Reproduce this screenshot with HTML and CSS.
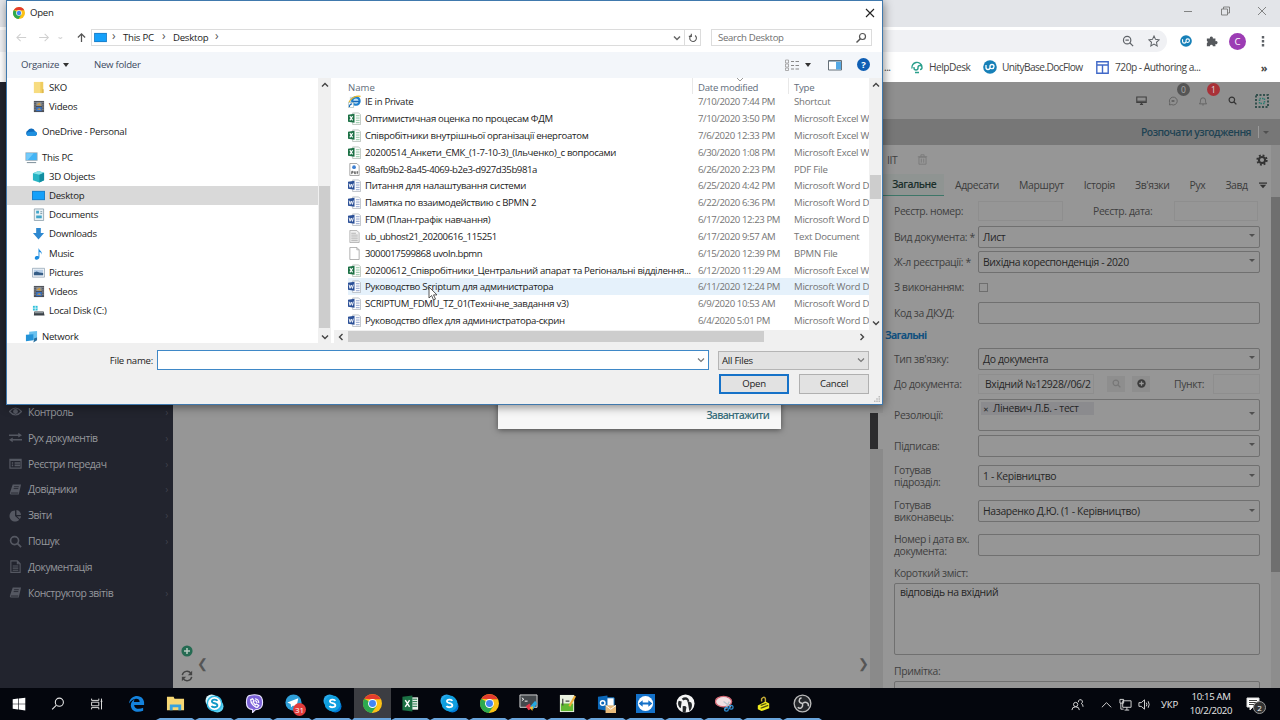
FILE: index.html
```html
<!DOCTYPE html>
<html lang="uk">
<head>
    <meta charset="UTF-8">
    <meta name="viewport" content="width=device-width, initial-scale=1.0">
    <title>Open</title>
    <link rel="stylesheet" href="styles.css">
</head>
<body>
    <!-- icon sprite -->
    <svg class="sprite" xmlns="http://www.w3.org/2000/svg">
        <symbol id="chrome" viewBox="0 0 24 24">
            <circle cx="12" cy="12" r="12" fill="#fbc116"/>
            <path d="M12 12 1.6 6A12 12 0 0 0 11 24l6-9z" fill="#2da94f"/>
            <path d="M1.6 6A12 12 0 0 1 22.4 6.5H12z" fill="#e33b2e"/>
            <circle cx="12" cy="12" r="5.6" fill="#fff"/>
            <circle cx="12" cy="12" r="4.4" fill="#4285f4"/>
        </symbol>
        <symbol id="screen" viewBox="0 0 14 12"><path d="M0 1h14v10H0z" fill="#1b7fc9"/><path d="M1 2h12v8H1z" fill="#14a0fa"/></symbol>
        <symbol id="folder" viewBox="0 0 14 14"><path d="M2 1h10v12H2z" fill="#f7dc80"/><path d="M9 1h3v12H9z" fill="#efcc5e"/><path d="M11 9h1.500v4H11z" fill="#dbb54a"/></symbol>
        <symbol id="video" viewBox="0 0 14 14"><path d="M2 1h11v12H2z" fill="#4a4d54"/><path d="M4.500 2h6v4.500h-6z" fill="#8d9298"/><path d="M4.500 7.500h6V12h-6z" fill="#3973c5"/><path d="M5 5l3-2 2 3zM5 10l3-1 2 2z" fill="#d29a3a"/><path d="M3.200 2v10M11.800 2v10" stroke="#d5d8dc" stroke-dasharray="1 1" stroke-width=".9"/></symbol>
        <symbol id="cloud" viewBox="0 0 14 14"><path d="M3 11.500a3 3 0 0 1 0-5.500 4.300 4.300 0 0 1 7.800.8A2.500 2.500 0 0 1 11.500 11.500z" fill="#0f6cbd"/><path d="M2 11a3 3 0 0 1 2.500-3.500l6-.5a2.400 2.400 0 0 1 1 4.500H3z" fill="#1e90e0"/></symbol>
        <symbol id="pc" viewBox="0 0 14 14"><path d="M.5 1.500h13v9H.5z" fill="#8fa6b5"/><path d="M1.300 2.300h11.400v7.400H1.300z" fill="#43b4f5"/><path d="M1.300 2.300h8L3 9.700H1.300z" fill="#76cbfa"/><path d="M2 12.500h10" stroke="#718591"/></symbol>
        <symbol id="cube" viewBox="0 0 14 14"><path d="M1 3.500 7 1l6 2v8L8 13.500 1 11z" fill="#27b5c4"/><path d="M1 3.500 7 1l6 2-5 2z" fill="#8be3e8"/><path d="M8 5l5-2v8l-5 2.500z" fill="#128da0"/></symbol>
        <symbol id="docs" viewBox="0 0 14 14"><path d="M2.500 1h10v12.500h-10z" fill="#e9f1f5" stroke="#8297a3" stroke-width=".8"/><path d="M4.500 3h3v3h-3zM4.500 8h6v3h-6z" fill="#41a5c9"/><path d="M9 4h2M9 6h2" stroke="#7796a5"/></symbol>
        <symbol id="down" viewBox="0 0 14 14"><path d="M4.500 1h5v5.500H13L7 13.500 1 6.500h3.500z" fill="#2e88d0"/></symbol>
        <symbol id="music" viewBox="0 0 14 14"><path d="M7 1c1 3 4 3 3.500 7-.5-2-1.500-2.500-2.500-2.600V11c0 3-5 3.500-5 1s3-2.500 4-1.800z" fill="#1a8be0"/></symbol>
        <symbol id="pic" viewBox="0 0 14 14"><path d="M.5 2.500h13v9.500H.5z" fill="#f4f6f8" stroke="#8ea1b3" stroke-width=".8"/><path d="M2 4h10v6H2z" fill="#b8cfe8"/><path d="M2 10V7l3-1 3 1 4 .5V10z" fill="#365d86"/></symbol>
        <symbol id="disk" viewBox="0 0 14 14"><path d="M1 2h5v5H1z" fill="#2ec0da"/><path d="M3.500 2v5M1 4.500h5" stroke="#fff" stroke-width=".7"/><path d="M2.500 8h10l1 4.500H2z" fill="#3a4147"/><path d="M3 8.500h9v1.500H3z" fill="#8c9499"/></symbol>
        <symbol id="net" viewBox="0 0 14 14"><path d="M4.500 2 13 1v8l-3 2-5.500-1z" fill="#69c1ef"/><path d="M1 5l8-.5V11L1 12z" fill="#2493d7"/><path d="M10 9l3-1v3l-4 2.500z" fill="#2a6f9e"/></symbol>
        <symbol id="excel" viewBox="0 0 14 14"><path d="M5 1h6.500L13.500 3v10.500H5z" fill="#fbfdfb" stroke="#a3ada6" stroke-width=".7"/><path d="M8.500 4h4M8.500 6.500h4M8.500 9h4M8.500 11.500h4" stroke="#8cc3a0"/><path d="M0 3 7 2v9.500L0 10.500z" fill="#1c7145"/><path d="M2 4.500l3 4.500M5 4.500L2 9" stroke="#fff" stroke-width="1.200"/></symbol>
        <symbol id="word" viewBox="0 0 14 14"><path d="M5 1h6.500L13.500 3v10.500H5z" fill="#fbfcfe" stroke="#a3a8b0" stroke-width=".7"/><path d="M8.500 4h4M8.500 6.500h4M8.500 9h4M8.500 11.500h4" stroke="#8d9fc9"/><path d="M0 3 7 2v9.500L0 10.500z" fill="#2a4f97"/><path d="M1.200 5l1 4 1.300-3.500L4.800 9l1-4" stroke="#fff" fill="none"/></symbol>
        <symbol id="text" viewBox="0 0 14 14"><path d="M2 .5h7.500L12 3v10.500H2z" fill="#f0f0f0" stroke="#999" stroke-width=".7"/><path d="M3.500 3.500h5M3.500 5.500h7M3.500 7.500h7M3.500 9.500h7M3.500 11.500h7" stroke="#aaa" stroke-width=".9"/></symbol>
        <symbol id="blank" viewBox="0 0 14 14"><path d="M2 .5h7.500L12 3v10.500H2z" fill="#fff" stroke="#999" stroke-width=".8"/><path d="M9.500.5V3H12" fill="none" stroke="#999" stroke-width=".7"/></symbol>
        <symbol id="pdf" viewBox="0 0 14 14"><path d="M2 .5h7.500L12 3v10.500H2z" fill="#fff" stroke="#888" stroke-width=".8"/><circle cx="6.500" cy="4.500" r="2" fill="#3d7fd1"/><path d="M4 9v3M4 9h1.500v1.500H4M7 9v2.500h1.300V9M10 9v3M9.500 9.700h1.500" stroke="#444" stroke-width=".8" fill="none"/></symbol>
        <symbol id="ie" viewBox="0 0 14 14"><path d="M2 2h10v9H2z" fill="#c6d8e6"/><circle cx="8.500" cy="6.500" r="4" fill="#bfe2f8" stroke="#1d80cf" stroke-width="2.400"/><path d="M5 7h7.500" stroke="#1668b8" stroke-width="1.500"/><path d="M1 8C3 3 9 .5 13.500 1.500" stroke="#e9b827" fill="none" stroke-width="1.300"/><path d="M.5 8h5.500v5.500H.5z" fill="#fff" stroke="#8aa" stroke-width=".6"/><path d="M1.500 13c0-3 1-3.500 3-3.500" stroke="#1668b8" stroke-width="1.200" fill="none"/></symbol>
        <symbol id="lens" viewBox="0 0 14 14"><circle cx="6" cy="6" r="4.300" fill="none" stroke="currentColor" stroke-width="1.800"/><path d="M9 9l4 4" stroke="currentColor" stroke-width="2"/></symbol>
        <symbol id="book" viewBox="0 0 14 14"><path d="M4 1.500h9l-2.500 11H2A1.500 1.500 0 0 1 1 10.500z" fill="currentColor"/><path d="M5.500 4h5M5 6h5M2 10.800h8" stroke="#22242e" stroke-width=".9"/></symbol>
        <symbol id="skype" viewBox="0 0 20 20"><circle cx="7" cy="7" r="6.500" fill="#28a8ea"/><circle cx="13" cy="13" r="6.500" fill="#0078d4"/><circle cx="10" cy="10" r="8.300" fill="#109fdf"/><path d="M13 7.200C12 5.300 7.300 5.500 7.300 7.800s5.700 1.500 5.700 4-5 2.800-6.200.8" fill="none" stroke="#fff" stroke-width="1.900"/></symbol>
        <symbol id="skypelight" viewBox="0 0 20 20"><circle cx="7" cy="7" r="6.500" fill="#d9f6fd"/><circle cx="13" cy="13" r="6.500" fill="#5fd2f2"/><circle cx="10" cy="10" r="7.600" fill="#fff" stroke="#38bde6" stroke-width="1.600"/><path d="M13 7.200C12 5.300 7.300 5.500 7.300 7.800s5.700 1.500 5.700 4-5 2.800-6.200.8" fill="none" stroke="#1099c6" stroke-width="2"/></symbol>
        <symbol id="ub" viewBox="0 0 14 14"><circle cx="7" cy="7" r="6.800" fill="#1780b8"/><path d="M3 5v2.500q0 2 2 2t2-2V6.500q0-2 2-2t2 2-2 2.200q-1.500 0-2-1" fill="none" stroke="#fff" stroke-width="1.300"/></symbol>
    </svg>

    <div class="desktop">
        <!-- browser window behind the dialog -->
        <div class="tabstrip">
            <svg class="win" viewBox="0 0 84 10"><path d="M2 5.500h8M39.500 3h6v6h-6zM41.500 3V1h6v6h-2M76 1l8 8M84 1l-8 8" fill="none" stroke="#777" stroke-width=".9"/></svg>
        </div>
        <div class="toolbar">
            <div class="omnibox">
                <svg class="i12" viewBox="0 0 14 14"><circle cx="6" cy="6" r="4.300" fill="none" stroke="#5f6368" stroke-width="1.400"/><path d="M9 9l4 4M4 6h4" stroke="#5f6368" stroke-width="1.400"/></svg>
                <svg class="i12" viewBox="0 0 14 14"><path d="M7 1.200l1.800 3.900 4.200.5-3.100 2.900.8 4.200L7 10.600l-3.700 2.100.8-4.200L1 5.600l4.200-.5z" fill="none" stroke="#5f6368" stroke-width="1.200"/></svg>
            </div>
            <svg class="i12"><use href="#ub"/></svg>
            <svg class="i12" viewBox="0 0 14 14"><path d="M1 4h3.500a1.800 1.800 0 1 1 3.500 0h3v3.200a1.800 1.800 0 1 1 0 3.300V13H8a1.700 1.700 0 0 0-3.400 0H1V9.700a1.700 1.700 0 0 0 0-3z" fill="#55585c"/></svg>
            <span class="avatar">C</span>
            <svg class="dots" viewBox="0 0 4 14"><path d="M.8 2h2.400v2.400H.8zM.8 6h2.400v2.400H.8zM.8 10h2.400v2.400H.8z" fill="#5f6368"/></svg>
        </div>
        <div class="bookmarks">
            <span class="cut">...</span>
            <svg class="bm-help" viewBox="0 0 14 14"><path d="M2 8.500a5 5 0 0 1 10-2M4 7v1q0 2 2 2t2-2V7.500q0-2 2-2t2 2-2 2M5 12.500h4" fill="none" stroke="#2a9f8c" stroke-width="1.400"/></svg>
            <span class="b1">HelpDesk</span>
            <svg class="bm-ub"><use href="#ub"/></svg>
            <span class="b2">UnityBase.DocFlow</span>
            <svg class="bm-grid" viewBox="0 0 13 13"><path d="M.8.8h11.400v11.400H.8zM.8 4h11.400M6.500 4v8" fill="none" stroke="#4169c8" stroke-width="1.400"/></svg>
            <span class="b3">720p - Authoring a...</span>
            <b class="more">»</b>
        </div>

        <div class="app">
            <nav class="side">
                <a><svg viewBox="0 0 14 14"><path d="M.5 7Q7-.5 13.500 7 7 14.500.5 7z" fill="none" stroke="currentColor" stroke-width="1.300"/><circle cx="7" cy="7" r="2.600" fill="currentColor"/></svg><span>Контроль</span><i>›</i></a>
                <a><svg viewBox="0 0 14 14"><path d="M0 4.500h11M3 9.500h11" stroke="currentColor" stroke-width="1.600"/><path d="M10 2l4 2.500-4 2.500zM4 7 0 9.500l4 2.500z" fill="currentColor"/></svg><span>Рух документів</span><i>›</i></a>
                <a><svg viewBox="0 0 14 14"><path d="M1 2.500h12v9.500H1z" fill="none" stroke="currentColor" stroke-width="1.300"/><path d="M1 3.500h12M3 6.500h1.500M3 9h1.500M6 6.500h6M6 9h6" stroke="currentColor" stroke-width="1.700"/></svg><span>Реєстри передач</span><i>›</i></a>
                <a><svg><use href="#book"/></svg><span>Довідники</span><i>›</i></a>
                <a><svg viewBox="0 0 14 14"><path d="M6.500 1.500V7.500l4.500 4A6 6 0 1 1 6.500 1.500zM8 1a6 6 0 0 1 5 5.500H8zM8.500 7.700H13a6 6 0 0 1-1.300 3z" fill="currentColor"/></svg><span>Звіти</span><i>›</i></a>
                <a><svg><use href="#lens"/></svg><span>Пошук</span><i>›</i></a>
                <a><svg viewBox="0 0 14 14"><path d="M2 1h7l3 3v9.300H2zM9 1v3h3M4 6.500h6M4 8.700h6M4 11h6" fill="none" stroke="currentColor" stroke-width="1.200"/></svg><span>Документація</span></a>
                <a><svg><use href="#book"/></svg><span>Конструктор звітів</span><i>›</i></a>
            </nav>

            <div class="main">
                <header class="apphead">
                    <svg class="h1" viewBox="0 0 14 14"><path d="M1 2.500h12v7H1zM1 8h12" fill="none" stroke="#3f3f3f" stroke-width="1.400"/><path d="M5 12h4M7 9v3" stroke="#3f3f3f" stroke-width="1.600"/></svg>
                    <span class="badged"><svg viewBox="0 0 14 14"><path d="M2 12.500l.5-3A5.500 5.500 0 1 1 5 12z" fill="none" stroke="#555"/><path d="M5 7h4" stroke="#555" stroke-width="2"/></svg><em>0</em></span>
                    <span class="badged red"><svg viewBox="0 0 14 14"><path d="M2 11h10c-1-1-1.500-2-1.500-5a3.500 3.500 0 0 0-7 0C3.500 9 3 10 2 11zM6 12.500h2" fill="none" stroke="#555"/></svg><em>1</em></span>
                    <svg class="h4"><use href="#lens"/></svg>
                    <svg class="h5" viewBox="0 0 16 16"><path d="M2 2h12v12H2z" fill="none" stroke="#33504d" stroke-width="2" stroke-dasharray="2 1.500"/><path d="M5.500 5.500h5v5h-5z" fill="none" stroke="#2b7c70" stroke-width="1.500" stroke-dasharray="1.500 1"/></svg>
                </header>
                <div class="actions"><b>Розпочати узгодження</b><span class="split"></span><i class="caret"></i></div>
                <div class="cols">
                    <section class="viewer">
                        <div class="tools">
                            <svg viewBox="0 0 14 14"><circle cx="7" cy="7" r="6.500" fill="#256b52"/><path d="M7 3.500v7M3.500 7h7" stroke="#b5c9c0" stroke-width="1.800"/></svg>
                            <svg viewBox="0 0 14 14"><path d="M1.500 6A5.500 5.500 0 0 1 11.500 4M12.500 8A5.500 5.500 0 0 1 2.500 10" fill="none" stroke="#444" stroke-width="1.700"/><path d="M13 1v5H8zM1 13V8h5z" fill="#444"/></svg>
                        </div>
                        <b>❮</b>
                        <b class="next">❯</b>
                    </section>
                    <div class="splitter"></div>
                    <section class="panel">
                        <div class="doc"><span>ІІТ</span>
                            <svg class="trash" viewBox="0 0 14 14"><path d="M2.500 4h9v9h-9zM1 3.500h12M5 3V1h4v2M5.500 6v5M8.500 6v5" fill="none" stroke="#777"/></svg>
                            <svg class="gear" viewBox="0 0 14 14"><circle cx="7" cy="7" r="5.500" fill="none" stroke="#333" stroke-width="2.200" stroke-dasharray="2.160 2.160"/><circle cx="7" cy="7" r="3.600" fill="none" stroke="#333" stroke-width="2.400"/></svg>
                        </div>
                        <div class="tabs">
                            <b>Загальне</b><span>Адресати</span><span>Маршрут</span><span>Історія</span><span>Зв'язки</span><span>Рух</span><span class="last">Завд</span>
                            <svg viewBox="0 0 10 8"><path d="M0 1h10" stroke="#333" stroke-width="1.600"/><path d="M1 3h8L5 7.500z" fill="#333"/></svg>
                        </div>
                        <div class="form">
                            <div class="row r26"><label>Реєстр. номер:</label><div class="ghost w85"></div><label class="date">Реєстр. дата:</label><div class="ghost w93"></div></div>
                            <div class="row"><label>Вид документа: *</label><div class="field">Лист<i class="caret"></i></div></div>
                            <div class="row"><label>Ж-л реєстрації: *</label><div class="field">Вихідна кореспонденція - 2020<i class="caret"></i></div></div>
                            <div class="row r26"><label>З виконанням:</label><div class="check"></div></div>
                            <div class="row"><label>Код за ДКУД:</label><div class="field"></div></div>
                            <h4>Загальні</h4>
                            <div class="row"><label>Тип зв'язку:</label><div class="field">До документа<i class="caret"></i></div></div>
                            <div class="row"><label>До документа:</label><div class="ghost docno">Вхідний №12928//06/2</div>
                                <div class="mini"><svg><use href="#lens"/></svg></div>
                                <div class="mini on"><svg viewBox="0 0 14 14"><circle cx="7" cy="7" r="6.500" fill="#3c3c3c"/><path d="M7 3.500v7M3.500 7h7" stroke="#999" stroke-width="2"/></svg></div>
                                <label class="point">Пункт:</label><div class="ghost w47"></div></div>
                            <div class="row r37"><label>Резолюції:</label><div class="field tall"><span class="tag"><small>✕</small> Ліневич Л.Б. - тест</span><i class="caret"></i></div></div>
                            <div class="row"><label>Підписав:</label><div class="field"><i class="caret"></i></div></div>
                            <div class="row r36"><label>Готував<br>підрозділ:</label><div class="field">1 - Керівництво<i class="caret"></i></div></div>
                            <div class="row r34"><label>Готував<br>виконавець:</label><div class="field">Назаренко Д.Ю. (1 - Керівництво)<i class="caret"></i></div></div>
                            <div class="row r34"><label>Номер і дата вх.<br>документа:</label><div class="field"></div></div>
                            <div class="row r21"><label class="wide">Короткий зміст:</label></div>
                            <div class="area">відповідь на вхідний</div>
                            <div class="row note"><label class="wide">Примітка:</label></div>
                            <div class="area"></div>
                        </div>
                    </section>
                    <div class="pagebar"><i></i></div>
                </div>
            </div>
        </div>

        <!-- taskbar -->
        <footer class="taskbar">
            <div class="sys"><svg viewBox="0 0 20 20"><path d="M3 4.800 9 4v5.700H3zM9.700 3.900 17 3v6.700H9.700zM3 10.400H9v5.700l-6-.8zM9.700 10.400H17v6.700l-7.300-1z" fill="#fff"/></svg></div>
            <div class="sys"><svg viewBox="0 0 20 20"><circle cx="11.500" cy="8" r="4.500" fill="none" stroke="#e6e6e6" stroke-width="1.200"/><path d="M8 11.500 3.500 16" stroke="#e6e6e6" stroke-width="1.200"/></svg></div>
            <div class="sys"><svg viewBox="0 0 20 20"><path d="M4 4v2h8V4M4 16v-2h8v2M4 8h8v4H4zM15 4v12M14 7h2" fill="none" stroke="#ddd" stroke-width="1.100"/></svg></div>
            <div class="task off"><svg viewBox="0 0 20 20"><path d="M2 10C3 4 7 2 10.500 2c5 0 7.500 4 7.500 7v2.500H7.500c.3 4.500 5.500 5 9.500 3v3C11 20 4.500 18.500 4 12c0-3.500 2-5.500 4.500-6.500-1 .8-1.200 2-1.200 3h6C13.300 4 7 3.500 2 10z" fill="#1482dc"/></svg></div>
            <div class="task"><svg viewBox="0 0 20 20"><path d="M1 3h7l1 2h10v12H1z" fill="#f7d774"/><path d="M4 11h12v6h-3v-3H7v3H4z" fill="#36a2e0"/></svg></div>
            <div class="task"><svg><use href="#skypelight"/></svg></div>
            <div class="task"><svg viewBox="0 0 20 20"><path d="M5 1.500q5-1.500 10 0 3.500 1.500 3.500 7.500t-4.500 7l-3 .5-3 3v-3Q1.500 16 1.500 9T5 1.500z" fill="#7d63d8" stroke="#eae5ff" stroke-width="1.200"/><path d="M6 6c0 4 4 8 7 8l1.500-2-2.500-1.500-1.200 1L8.500 8.500l1-1.200L8 5zM10.500 5q4 .5 4 4.500M10.500 7q2 .3 2.200 2.500" fill="none" stroke="#fff" stroke-width="1.300"/></svg></div>
            <div class="task tg"><svg viewBox="0 0 20 20"><circle cx="10" cy="9" r="8.500" fill="#2fa0d9"/><path d="M3.500 9 15 4.500l-2 10-3.500-2.500-2 2-.5-3.500z" fill="#fff"/></svg><em>31</em></div>
            <div class="task"><svg><use href="#skype"/></svg></div>
            <div class="task active"><svg><use href="#chrome"/></svg></div>
            <div class="task"><svg viewBox="0 0 20 20"><path d="M10 3.500h8v13h-8z" fill="#e8efe9"/><path d="M12 5.500h5M12 8h5M12 10.500h5M12 13h5" stroke="#1c7145"/><path d="M1.500 3 12 1.500v17L1.500 17z" fill="#1c7145"/><path d="M4.500 6.500l4.500 7M9 6.500l-4.500 7" stroke="#fff" stroke-width="1.500"/></svg></div>
            <div class="task"><svg><use href="#skype"/></svg></div>
            <div class="task"><svg><use href="#chrome"/></svg></div>
            <div class="task"><svg viewBox="0 0 20 20"><path d="M1 1h18v13H1z" fill="#44484c" stroke="#d8d8d8"/><path d="M3 4l2 1.500L3 7M6 7.500h3" stroke="#fff" fill="none"/><path d="M7 13l4-3 3 5-4 2z" fill="#e5384a"/><path d="M12 13l5-6 2 3-4 6z" fill="#23a8e0"/><path d="M11 14l4-1-1 5z" fill="#f2c230"/></svg></div>
            <div class="task"><svg viewBox="0 0 20 20"><path d="M2 1h15v18H2z" fill="#e9f1e0"/><path d="M3 10h13v8H3z" fill="#62b832"/><path d="M5 5v7M8 7.500h4" stroke="#444" stroke-width="1.300"/><path d="M18 2l-6 11" stroke="#efb03a" stroke-width="2.200"/></svg></div>
            <div class="task"><svg viewBox="0 0 20 20"><path d="M9 4h9v9H9z" fill="#fff" stroke="#0a6fc0"/><path d="M1 3l10-1.500v16L1 16z" fill="#0b67b8"/><circle cx="6" cy="9.500" r="2.400" fill="none" stroke="#fff" stroke-width="1.500"/><path d="M9 12h11v8H9z" fill="#e8bb7b"/><path d="M9 12l5.500 4L20 12" fill="none" stroke="#fff"/></svg></div>
            <div class="task"><svg viewBox="0 0 20 20"><path d="M0 0h20v20H0z" fill="#1471c9"/><circle cx="10" cy="10" r="8" fill="#fff"/><path d="M2.800 10 7 6.500V9h6V6.500l4.200 3.500-4.200 3.500V11H7v2.500z" fill="#1471c9"/></svg></div>
            <div class="task"><svg viewBox="0 0 20 20"><circle cx="10" cy="10" r="9.500" fill="#f5f5f5"/><path d="M3 7c-2 3 0 7 2 8l1-7zM6 5q4-3 7 0l1 2-4 2zM12 7l4 2c2 3 0 8-2 9l-1-6zM7 13q3-1 4 1l-1 6-3-1z" fill="#24272a"/><path d="M7 7.500q3-2.500 5-.5l-1 5-4 .5z" fill="#f5f5f5"/></svg></div>
            <div class="task"><svg viewBox="0 0 20 20"><ellipse cx="9" cy="8" rx="8.500" ry="5.500" fill="#f1dfe2" stroke="#d56b77" stroke-width="1.400"/><path d="M9 8l8 6M15 8l-4 8" stroke="#b9c4cc" stroke-width="1.300"/><circle cx="12" cy="16" r="2" fill="none" stroke="#2f8dd1" stroke-width="1.300"/><circle cx="17" cy="14" r="2" fill="none" stroke="#2f8dd1" stroke-width="1.300"/></svg></div>
            <div class="task"><svg viewBox="0 0 20 20"><path d="M8 8V5q3-3 4 0v4" fill="none" stroke="#c3a936" stroke-width="1.500"/><path d="M4 12l8-4 4 2v5l-8 3-4-2z" fill="#f1ed1e"/><path d="M7 12l6-2M7 15l8-3" stroke="#504e10" stroke-width="1.300"/></svg></div>
            <div class="task"><svg viewBox="0 0 20 20"><circle cx="10" cy="10" r="8.800" fill="#24262a" stroke="#b9b9b9" stroke-width="1.400"/><path d="M10 10C5 9 6 5 9 4M10 10c4-3 7 0 6 3M10 10c1 5-3 6-5 4" fill="none" stroke="#c9c9c9" stroke-width="1.500"/></svg></div>
            <div class="tray">
                <svg class="t1" viewBox="0 0 14 14"><circle cx="5" cy="7" r="2.300"/><path d="M1 13q0-3.500 4-3.500T9 13M8 4.500a2.200 2.200 0 1 1 3 1.500q2 .5 2 3.500"/></svg>
                <svg class="t2" viewBox="0 0 14 14"><path d="M2 10l5-5 5 5"/></svg>
                <svg class="t3" viewBox="0 0 14 14"><path d="M4 3h9v7H4zM6 13h5M8.500 10v3M1 1.500h4v4H1zM2 5.500V12h3"/></svg>
                <svg class="t4" viewBox="0 0 14 14"><path d="M1 5h2.500L7 2v10L3.500 9H1zM9 5q1 2 0 4M11 3.500q2 3.500 0 7"/></svg>
                <span class="lang">УКР</span>
                <div class="clock"><span>10:15 AM</span><span>10/2/2020</span></div>
                <div class="notes"><svg viewBox="0 0 14 14"><path d="M1 1h12v9H7l-3 3v-3H1z" fill="#fff"/><path d="M3 3.500h8M3 5.500h8M3 7.500h5" stroke="#111" stroke-width=".8"/></svg><em>2</em></div>
            </div>
        </footer>

        <!-- upload popup under the file dialog -->
        <div class="upload"><b>Завантажити</b></div>

        <!-- file open dialog -->
        <div class="dialog">
            <div class="title"><svg><use href="#chrome"/></svg><span>Open</span><svg class="x" viewBox="0 0 10 10"><path d="M1 1l8 8M9 1 1 9" stroke="#222" stroke-width="1.100"/></svg></div>
            <div class="nav">
                <svg class="arrows" viewBox="0 0 66 14"><path d="M11 7H1M5 3 1 7l4 4M25 7h10M31 3l4 4-4 4M46 7l2 1 2-1" fill="none" stroke="#cfcfcf" stroke-width="1.100"/></svg>
                <svg class="up" viewBox="0 0 10 12"><path d="M5 11V2M1 6l4-4 4 4" fill="none" stroke="#555" stroke-width="1.400"/></svg>
                <div class="path"><svg class="scr"><use href="#screen"/></svg><i>›</i><span class="pc">This PC</span><i>›</i><span class="dt">Desktop</span><i>›</i>
                    <svg class="dropdown" viewBox="0 0 10 10"><path d="M2 3.500 5 6.500l3-3" fill="none" stroke="#666" stroke-width="1.500"/></svg></div>
                <div class="reload"><svg viewBox="0 0 12 12"><path d="M8.500 3A4 4 0 1 1 4 2.800M4 .8V4h-3" fill="none" stroke="#555" stroke-width="1.300"/></svg></div>
                <div class="search"><span>Search Desktop</span><svg viewBox="0 0 12 12"><circle cx="7.500" cy="4.500" r="3" fill="none" stroke="#555" stroke-width="1.200"/><path d="M5.300 6.700 1.500 10.500" stroke="#555" stroke-width="1.500"/></svg></div>
            </div>
            <div class="bar">
                <span class="org">Organize</span><i class="tri"></i><span class="newf">New folder</span>
                <svg class="view" viewBox="0 0 14 12"><path d="M.5 1h3v3h-3zM.5 5h3v3h-3zM.5 9h3v2.500h-3z" fill="none" stroke="#999" stroke-width=".8"/><path d="M6 2.500h3M10.500 2.500H14M6 6.500h3M10.500 6.500H14M6 10h3M10.500 10H14" stroke="#888"/></svg>
                <i class="tri t"></i>
                <svg class="preview" viewBox="0 0 14 12"><path d="M.5 1.500h13v9.500H.5z" fill="#fff" stroke="#667078"/><path d="M8 2h5v8.500H8z" fill="#54a9e5"/><path d="M1 2.500h12" stroke="#9cb2c2"/></svg>
                <span class="help">?</span>
            </div>
            <div class="panes">
                <div class="tree">
                    <div class="node"><svg><use href="#folder"/></svg>SKO</div>
                    <div class="node"><svg><use href="#video"/></svg>Videos</div>
                    <div class="node top"><svg><use href="#cloud"/></svg>OneDrive - Personal</div>
                    <div class="node top"><svg><use href="#pc"/></svg>This PC</div>
                    <div class="node"><svg><use href="#cube"/></svg>3D Objects</div>
                    <div class="node sel"><svg><use href="#screen"/></svg>Desktop</div>
                    <div class="node"><svg><use href="#docs"/></svg>Documents</div>
                    <div class="node"><svg><use href="#down"/></svg>Downloads</div>
                    <div class="node"><svg><use href="#music"/></svg>Music</div>
                    <div class="node"><svg><use href="#pic"/></svg>Pictures</div>
                    <div class="node"><svg><use href="#video"/></svg>Videos</div>
                    <div class="node"><svg><use href="#disk"/></svg>Local Disk (C:)</div>
                    <div class="node top"><svg><use href="#net"/></svg>Network</div>
                </div>
                <div class="vbar"><svg viewBox="0 0 10 10"><path d="M2 6.500 5 3.500l3 3"/></svg><i></i><svg viewBox="0 0 10 10"><path d="M2 3.500 5 6.500l3-3"/></svg></div>
                <div class="listing">
                    <div class="upper">
                        <div class="files">
                            <div class="head"><span>Name</span><span class="mod">Date modified<svg viewBox="0 0 8 4"><path d="M1 0l3 3 3-3" fill="none" stroke="#999"/></svg></span><span>Type</span></div>
                            <div class="file"><svg><use href="#ie"/></svg><span>IE in Private</span><span>7/10/2020 7:44 PM</span><span>Shortcut</span></div>
                            <div class="file"><svg><use href="#excel"/></svg><span>Оптимистичная оценка по процесам ФДМ</span><span>7/10/2020 3:50 PM</span><span>Microsoft Excel W</span></div>
                            <div class="file"><svg><use href="#excel"/></svg><span>Співробітники внутрішньої організації енергоатом</span><span>7/6/2020 12:33 PM</span><span>Microsoft Excel W</span></div>
                            <div class="file"><svg><use href="#excel"/></svg><span>20200514_Анкети_ЄМК_(1-7-10-3)_(Ільченко)_с вопросами</span><span>6/30/2020 1:08 PM</span><span>Microsoft Excel W</span></div>
                            <div class="file num"><svg><use href="#pdf"/></svg><span>98afb9b2-8a45-4069-b2e3-d927d35b981a</span><span>6/26/2020 2:23 PM</span><span>PDF File</span></div>
                            <div class="file"><svg><use href="#word"/></svg><span>Питання для налаштування системи</span><span>6/25/2020 4:42 PM</span><span>Microsoft Word D</span></div>
                            <div class="file"><svg><use href="#word"/></svg><span>Памятка по взаимодействию с BPMN 2</span><span>6/22/2020 6:36 PM</span><span>Microsoft Word D</span></div>
                            <div class="file"><svg><use href="#word"/></svg><span>FDM (План-графік навчання)</span><span>6/17/2020 12:23 PM</span><span>Microsoft Word D</span></div>
                            <div class="file num"><svg><use href="#text"/></svg><span>ub_ubhost21_20200616_115251</span><span>6/17/2020 9:57 AM</span><span>Text Document</span></div>
                            <div class="file num"><svg><use href="#blank"/></svg><span>3000017599868 uvoln.bpmn</span><span>6/15/2020 12:39 PM</span><span>BPMN File</span></div>
                            <div class="file"><svg><use href="#excel"/></svg><span>20200612_Співробітники_Центральний апарат та Регіональні відділення...</span><span>6/12/2020 11:29 AM</span><span>Microsoft Excel W</span></div>
                            <div class="file hover"><svg><use href="#word"/></svg><span>Руководство Scriptum для администратора</span><span>6/11/2020 12:24 PM</span><span>Microsoft Word D</span></div>
                            <div class="file"><svg><use href="#word"/></svg><span>SCRIPTUM_FDMU_TZ_01(Технічне_завдання v3)</span><span>6/9/2020 10:53 AM</span><span>Microsoft Word D</span></div>
                            <div class="file"><svg><use href="#word"/></svg><span>Руководство dflex для администратора-скрин</span><span>6/4/2020 5:01 PM</span><span>Microsoft Word D</span></div>
                        </div>
                        <div class="vbar short"><svg viewBox="0 0 10 10"><path d="M2 6.500 5 3.500l3 3"/></svg><i></i><svg viewBox="0 0 10 10"><path d="M2 3.500 5 6.500l3-3"/></svg></div>
                    </div>
                    <div class="hbar"><svg viewBox="0 0 10 10"><path d="M6.500 2 3.500 5l3 3"/></svg><i></i><svg viewBox="0 0 10 10"><path d="M3.500 2 6.500 5l-3 3"/></svg></div>
                </div>
            </div>
            <div class="foot">
                <div class="line"><label>File name:</label><div class="name"><svg viewBox="0 0 10 10"><path d="M2 3.500 5 6.500l3-3"/></svg></div><div class="filter">All Files<svg viewBox="0 0 10 10"><path d="M2 3.500 5 6.500l3-3"/></svg></div></div>
                <div class="buttons"><span class="btn ok">Open</span><span class="btn">Cancel</span></div>
            </div>
            <svg class="grip" viewBox="0 0 8 8"><path d="M6 0h2v2H6zM6 3h2v2H6zM3 3h2v2H3zM6 6h2v2H6zM3 6h2v2H3zM0 6h2v2H0z" fill="#bbb"/></svg>
        </div>

        <svg class="cursor" viewBox="0 0 10 15"><path d="M1 1v11l2.600-2.500L5.500 14l2-.9-2-4.200H9z" fill="#fff" stroke="#444" stroke-width=".9"/></svg>
    </div>
</body>
</html>
```
FILE: styles.css
```css
* {
    box-sizing: border-box;
}
body {
    margin: 0;
    font-family: "Open Sans", "Noto Sans", sans-serif;
    font-size: 9.6px;
    color: #1c1c1c;
    overflow: hidden;
}
i, em {
    font-style: normal;
}
svg {
    display: block;
    flex: none;
}
.sprite {
    display: none;
}
.desktop {
    position: relative;
    width: 1280px;
    height: 720px;
    display: flex;
    flex-direction: column;
    overflow: hidden;
    white-space: nowrap;
}

/* browser chrome */
.tabstrip {
    height: 27px;
    background: #e3e5e9;
    display: flex;
    justify-content: flex-end;
    padding: 6px 14px 0 0;
}
.win {
    width: 84px;
    height: 10px;
}
.toolbar {
    height: 28px;
    background: #fff;
    display: flex;
    align-items: center;
}
.omnibox {
    width: 1167px;
    height: 22px;
    background: #f0f1f4;
    border-radius: 0 11px 11px 0;
    display: flex;
    align-items: center;
    justify-content: flex-end;
    gap: 14px;
    padding-right: 7px;
    margin-right: 13px;
}
.i12 {
    width: 12px;
    height: 12px;
    margin-right: 14px;
}
.omnibox .i12 {
    margin-right: 0;
}
.avatar {
    width: 17px;
    height: 17px;
    margin-left: -3px;
    border-radius: 50%;
    background: #9c3cb4;
    color: #fff;
    text-align: center;
    line-height: 17px;
}
.dots {
    width: 4px;
    height: 14px;
    margin-left: 15px;
}
.bookmarks {
    height: 27px;
    background: #fff;
    display: flex;
    align-items: center;
    padding: 0 13px 3px 884px;
    font-size: 10.200px;
    letter-spacing: -.5px;
    color: #444;
}
.cut {
    width: 26px;
}
.bm-help, .bm-ub {
    width: 14px;
    height: 14px;
    margin-right: 5px;
}
.bm-grid {
    width: 13px;
    height: 13px;
    margin-right: 6px;
}
.b1 {
    width: 54px;
}
.b2 {
    width: 94px;
    letter-spacing: -.6px;
}
.more {
    margin-left: auto;
    font-size: 11px;
}

/* document app, dimmed */
.app {
    height: 606px;
    display: flex;
}
.side {
    width: 173px;
    background: #22242e;
    padding-top: 317px;
    color: #96989d;
    font-size: 10.400px;
    letter-spacing: -.45px;
    flex: none;
}
.side a {
    height: 25.850px;
    display: flex;
    align-items: center;
    padding: 0 5px 0 9px;
}
.side svg {
    width: 13px;
    height: 13px;
    margin-right: 6px;
    color: #555862;
}
.side i {
    margin-left: auto;
    color: #3e414b;
}
.main {
    flex: 1;
    display: flex;
    flex-direction: column;
    background: #969696;
}
.apphead {
    height: 37px;
    background: #8f8f8f;
    display: flex;
    align-items: center;
    justify-content: flex-end;
    padding-right: 10px;
}
.h1 {
    width: 11px;
    height: 11px;
    margin-right: 21px;
}
.badged {
    position: relative;
    margin-right: 20px;
}
.badged svg {
    width: 10px;
    height: 10px;
}
.badged em {
    position: absolute;
    left: 9px;
    top: -13px;
    width: 13px;
    height: 13px;
    border-radius: 50%;
    background: #555;
    color: #aaa;
    font-size: 8.500px;
    line-height: 13px;
    text-align: center;
}
.badged.red em {
    background: #a93138;
    color: #ddd;
}
.h4 {
    width: 9px;
    height: 9px;
    color: #333;
    margin-right: 17px;
}
.h5 {
    width: 16px;
    height: 16px;
}
.actions {
    height: 26px;
    background: #777;
    display: flex;
    align-items: center;
    justify-content: flex-end;
    padding-right: 11px;
    font-size: 10.400px;
    letter-spacing: -.55px;
    color: #1f4353;
}
.actions b {
    font-weight: 600;
}
.split {
    width: 1px;
    height: 12px;
    background: #999;
    margin: 0 4px 0 7px;
}
.caret {
    border: 3px solid transparent;
    border-top-color: #505050;
    border-bottom: 0;
}
.cols {
    flex: 1;
    min-height: 0;
    display: flex;
}
.viewer {
    width: 697px;
    display: flex;
    align-items: flex-end;
    padding: 0 1px 6px 8px;
}
.tools {
    display: flex;
    flex-direction: column;
    gap: 13px;
    margin-right: 4px;
}
.tools svg {
    width: 12px;
    height: 12px;
}
.viewer b {
    font-size: 13px;
    line-height: 13px;
    color: #555;
    font-weight: normal;
    margin-bottom: 12px;
}
.viewer .next {
    margin-left: auto;
}
.splitter {
    width: 13px;
    background: linear-gradient(#909090 0 268px, transparent 268px 304px, #8a8a8a 304px);
    padding: 268px 5px 0 0;
}
.splitter::before {
    content: "";
    display: block;
    height: 36px;
    background: #2c2c2e;
}
.panel {
    width: 388px;
    font-size: 10.400px;
    letter-spacing: -.36px;
    color: #404040;
    overflow: hidden;
}
.doc {
    height: 29px;
    display: flex;
    align-items: center;
    padding: 0 3px 0 4px;
}
.trash {
    width: 11px;
    height: 11px;
    margin-left: 20px;
}
.gear {
    width: 12px;
    height: 12px;
    margin-left: auto;
}
.tabs {
    height: 24px;
    display: flex;
    align-items: center;
    margin-top: -1px;
    margin-bottom: 1px;
    color: #3c3c3c;
}
.tabs b {
    width: 61px;
    height: 22px;
    line-height: 21px;
    padding-left: 9px;
    margin-right: 11px;
    color: #1b2f2b;
    font-weight: 600;
    letter-spacing: -.55px;
    border-bottom: 1px solid #3d7668;
    background: #8f9492;
}
.tabs span {
    margin-right: 20px;
}
.tabs .last {
    margin-right: 11px;
}
.tabs svg {
    width: 8px;
    height: 7px;
}
.row {
    height: 25px;
    display: flex;
    align-items: center;
    padding-left: 11px;
}
.r21 { height: 21px; }
.r26 { height: 26px; }
.r34 { height: 34px; }
.r36 { height: 36px; }
.r37 { height: 37px; }
.note {
    height: 26px;
    padding-top: 6px;
}
.row label {
    width: 84px;
    flex: none;
    line-height: 12px;
    font-weight: 500;
}
.field {
    width: 282px;
    height: 22px;
    border: 1px solid #707070;
    border-radius: 2px;
    padding: 0 4px;
    display: flex;
    align-items: center;
    color: #262626;
}
.field .caret {
    margin-left: auto;
    margin-top: -2px;
}
.tall {
    height: 32px;
}
.tag {
    align-self: flex-start;
    height: 13px;
    margin-top: 2px;
    line-height: 12px;
    background: #8b8b8e;
    padding-right: 15px;
    margin-left: -2px;
}
.tag small {
    padding: 0 2px;
    font-size: 7px;
}
.ghost {
    height: 20px;
    border: 1px solid #8e8e8e;
}
.w85 { width: 85px; }
.w93 { width: 84px; }
.w47 { width: 47px; }
.row .date {
    width: 81px;
    margin-left: 30px;
}
.docno {
    width: 116px;
    padding-left: 6px;
    line-height: 18px;
    color: #262626;
}
.mini {
    width: 18px;
    height: 16px;
    background: #8e8e8e;
    display: flex;
    align-items: center;
    justify-content: center;
    margin-left: 13px;
    color: #777;
}
.mini.on {
    margin-left: 7px;
}
.mini svg {
    width: 9px;
    height: 9px;
}
.row .point {
    width: 39px;
    margin-left: 24px;
}
.check {
    width: 9px;
    height: 9px;
    margin-left: 1px;
    border: 1px solid #6e6e6e;
}
.form h4 {
    margin: 0;
    height: 21px;
    line-height: 21px;
    padding-left: 2px;
    font-size: 10.400px;
    letter-spacing: -.75px;
    color: #12517f;
}
.area {
    width: 366px;
    height: 72px;
    margin-left: 11px;
    border: 1px solid #707070;
    border-radius: 2px;
    padding: 1px 5px;
    color: #262626;
}
.pagebar {
    flex: 1;
    background: #8d8d8d;
    padding-top: 52px;
}
.pagebar i {
    display: block;
    height: 375px;
    background: #6f6f6f;
}

/* taskbar */
.taskbar {
    height: 32px;
    background: #04060d;
    display: flex;
}
.sys, .task {
    width: 39.200px;
    display: flex;
    align-items: center;
    justify-content: center;
    position: relative;
}
.sys:first-child {
    width: 38px;
}
.task {
    border-bottom: 2px solid #6aa5dc;
    border-left: 4px solid #04060d;
    border-right: 3px solid #04060d;
}
.task.off {
    border-bottom-color: #04060d;
}
.task.active {
    background: #3c3d42;
    border-left-width: 2px;
    border-right-width: 0;
}
.sys svg {
    width: 18px;
    height: 18px;
}
.task svg {
    width: 19px;
    height: 19px;
}
.task em, .notes em {
    position: absolute;
    left: 16px;
    top: 15px;
    width: 13px;
    height: 13px;
    border-radius: 50%;
    background: #e23b3b;
    color: #fff;
    font-size: 8px;
    line-height: 13px;
    text-align: center;
}
.tray {
    margin-left: auto;
    display: flex;
    align-items: center;
    color: #e8e8e8;
}
.tray svg {
    width: 13px;
    height: 13px;
    fill: none;
    stroke: #ddd;
}
.t1 {
    margin-right: 16px;
}
.t2, .t3 {
    margin-right: 6px;
}
.t4 {
    margin-right: 10px;
}
.lang {
    width: 27px;
    letter-spacing: -.2px;
}
.clock {
    width: 46px;
    display: flex;
    flex-direction: column;
    align-items: center;
    line-height: 14px;
    margin-right: 12px;
    letter-spacing: -.35px;
}
.notes {
    position: relative;
    width: 34px;
}
.tray .notes svg {
    width: 14px;
    height: 14px;
}
.notes em {
    left: 7px;
    top: 4px;
    background: #333;
    border: 1px solid #999;
    line-height: 11px;
}

/* upload popup */
.upload {
    position: absolute;
    left: 498px;
    top: 380px;
    width: 283px;
    height: 49px;
    background: #f7f7f7;
    box-shadow: 0 1px 6px rgba(0, 0, 0, .5);
    display: flex;
    justify-content: flex-end;
    padding: 28px 12px 0 0;
    font-size: 10.400px;
    letter-spacing: -.7px;
    color: #39707d;
}
.upload b {
    font-weight: 600;
}

/* open file dialog */
.dialog {
    position: absolute;
    left: 6px;
    top: 0;
    width: 877px;
    height: 405px;
    background: #fff;
    border: 1px solid #4079ad;
    box-shadow: 1px 2px 9px rgba(0, 0, 0, .45);
    display: flex;
    flex-direction: column;
    letter-spacing: -.25px;
}
.title {
    height: 23px;
    display: flex;
    align-items: center;
    padding: 0 7px 0 6px;
}
.title svg {
    width: 12px;
    height: 12px;
    margin-right: 5px;
}
.title .x {
    margin: 0 0 0 auto;
    width: 10px;
    height: 10px;
}
.nav {
    height: 28px;
    display: flex;
    align-items: center;
    padding: 0 10px 1px 9px;
}
.arrows {
    width: 61px;
    height: 13px;
}
.up {
    width: 9px;
    height: 11px;
    margin-right: 5px;
}
.path, .reload, .search {
    height: 17px;
    border: 1px solid #dcdcdc;
    display: flex;
    align-items: center;
}
.path {
    width: 594px;
}
.scr {
    width: 13px;
    height: 11px;
    margin: 0 5px 0 2px;
}
.path i {
    color: #555;
    width: 4px;
    line-height: 10px;
    font-size: 12px;
    margin-top: -3px;
}
.pc {
    width: 39px;
    margin-left: 7px;
}
.dt {
    width: 42px;
    margin-left: 7px;
}
.path .dropdown {
    width: 10px;
    height: 10px;
    margin: 0 2px 0 auto;
}
.reload {
    width: 16px;
    border-left: 0;
    justify-content: center;
    margin-right: 10px;
}
.reload svg {
    width: 10px;
    height: 10px;
}
.search {
    width: 161px;
    justify-content: space-between;
    padding: 0 4px 0 6px;
    color: #707070;
    letter-spacing: -.3px;
}
.search svg {
    width: 12px;
    height: 12px;
}
.bar {
    height: 26px;
    background: #f3f6fa;
    display: flex;
    align-items: center;
    padding: 0 12px 1px 14px;
    color: #3c4a5f;
}
.org {
    width: 42px;
}
.tri {
    border: 3px solid transparent;
    border-top: 4px solid #333;
    border-bottom: 0;
}
.newf {
    margin: 0 auto 0 25px;
}
.view {
    width: 14px;
    height: 12px;
}
.tri.t {
    margin: 0 17px 0 6px;
}
.preview {
    width: 14px;
    height: 12px;
    margin-right: 15px;
}
.help {
    width: 13px;
    height: 13px;
    border-radius: 50%;
    background: #0f5fb4;
    color: #fff;
    font-weight: bold;
    line-height: 13px;
    text-align: center;
}
.panes {
    height: 265px;
    display: flex;
}
.tree {
    width: 311px;
    overflow: hidden;
    margin-top: -.4px;
}
.node {
    height: 19.200px;
    display: flex;
    align-items: center;
    padding-left: 25px;
}
.node svg {
    width: 13px;
    height: 13px;
    margin-right: 4px;
}
.top {
    margin-top: 6.200px;
    padding-left: 18px;
}
.sel {
    background: #d9d9d9;
}
.vbar {
    width: 13px;
    background: #f0f0f0;
    display: flex;
    flex-direction: column;
    align-items: center;
    padding: 2px 0 1px;
}
.vbar svg, .hbar svg, .name svg, .filter svg {
    width: 10px;
    height: 10px;
    fill: none;
    stroke: #444;
    stroke-width: 1.400;
}
.line .name svg, .line .filter svg {
    stroke: #777;
    stroke-width: 1.200;
}
.vbar i {
    width: 11px;
    height: 142px;
    margin: auto 0 10px;
    background: #cdcdcd;
}
.vbar svg:last-child {
    margin-top: -6px;
}
.vbar.short {
    width: 13px;
}
.vbar.short i {
    height: 24px;
    margin: 85px 0 auto;
}
.vbar.short svg:last-child {
    margin-bottom: 1px;
}
.listing {
    flex: 1;
    margin-left: 3px;
    display: flex;
    flex-direction: column;
}
.upper {
    height: 252px;
    display: flex;
}
.files {
    width: 535px;
    overflow: hidden;
}
.head {
    height: 15.500px;
    padding: 3px 0 0 14px;
    display: flex;
    color: #626d7b;
}
.head span {
    width: 96px;
    flex: none;
    border-left: 1px solid #e8e8e8;
    padding-left: 5px;
    margin-top: -3px;
    padding-top: 3px;
}
.head span:first-child {
    width: 344px;
    border: 0;
    padding-left: 0;
    letter-spacing: 0;
}
.head .mod {
    position: relative;
}
.mod svg {
    position: absolute;
    left: 43px;
    top: 0;
    width: 8px;
    height: 4px;
}
.file {
    height: 16.820px;
    margin-left: 14px;
    display: flex;
    align-items: center;
}
.file svg {
    width: 13px;
    height: 13px;
    margin-right: 4px;
}
.file span {
    width: 333px;
    flex: none;
    letter-spacing: -.31px;
}
.num span:nth-child(2) {
    letter-spacing: -.43px;
}
.file span:nth-child(3) {
    width: 96px;
    letter-spacing: -.4px;
    color: #747474;
}
.file span:nth-child(4) {
    width: 75px;
    letter-spacing: -.22px;
    color: #747474;
}
.hover {
    background: #e5f1fb;
}
.hbar {
    height: 13px;
    background: #f0f0f0;
    display: flex;
    align-items: center;
    padding: 0 15px 0 2px;
    justify-content: space-between;
}
.hbar i {
    width: 416px;
    height: 11px;
    margin: 0 auto 0 2px;
    background: #cdcdcd;
}
.foot {
    flex: 1;
    background: #f0f0f0;
    padding: 7px 13px 0 0;
}
.line, .buttons {
    display: flex;
    justify-content: flex-end;
    align-items: center;
}
.line label {
    margin-right: 4px;
}
.name {
    width: 552px;
    height: 20px;
    background: #fff;
    border: 1px solid #3f88c7;
    margin-right: 9px;
    display: flex;
    align-items: center;
    justify-content: flex-end;
    padding-right: 2px;
}
.filter {
    width: 151px;
    height: 19px;
    background: #e2e2e2;
    border: 1px solid #b5b5b5;
    display: flex;
    align-items: center;
    justify-content: space-between;
    padding: 0 2px 0 3px;
}
.buttons {
    margin-top: 4px;
    gap: 10px;
}
.btn {
    width: 70px;
    height: 20px;
    border: 1px solid #b0b0b0;
    background: #e2e2e2;
    text-align: center;
    line-height: 18px;
}
.ok {
    border: 2px solid #1672c8;
    line-height: 16px;
}
.grip {
    position: absolute;
    right: 2px;
    bottom: 2px;
    width: 6px;
    height: 6px;
}
.cursor {
    position: absolute;
    left: 428px;
    top: 286px;
    width: 10px;
    height: 15px;
}
```
